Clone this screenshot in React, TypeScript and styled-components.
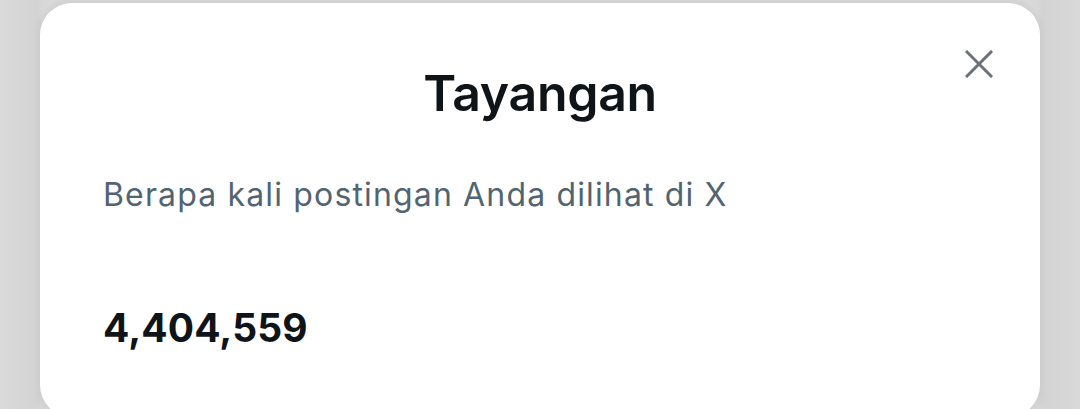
import styled, { createGlobalStyle } from "styled-components";

const GlobalStyle = createGlobalStyle`
  html,
  body {
    margin: 0;
    padding: 0;
    background: #d8d8d8;
    overflow: hidden;
  }
  * {
    box-sizing: border-box;
  }
`;

const Backdrop = styled.div`
  width: 1080px;
  height: 409px;
  padding: 3px 40px 0 40px;
  background: linear-gradient(90deg, #dadada 0%, #d3d3d3 3.5%, #d8d8d8 4%, #d8d8d8 96%, #d3d3d3 96.5%, #d9d9d9 100%);
  overflow: hidden;
`;

const Sheet = styled.div`
  width: 1000px;
  height: 414px;
  background: #ffffff;
  border-radius: 32px;
  box-shadow: 0 0 8px rgba(0, 0, 0, 0.08);
  padding: 0 63px;
  font-family: Inter, "Noto Sans", "Liberation Sans", sans-serif;
  color: #0f1419;
`;

const Header = styled.div`
  display: grid;
  grid-template-columns: 1fr auto 1fr;
  align-items: center;
  padding-top: 58px;
`;

const Title = styled.h1`
  grid-column: 2;
  margin: 0;
  font-size: 50px;
  line-height: 64px;
  font-weight: 600;
  letter-spacing: -0.3px;
`;

const CloseButton = styled.button`
  grid-column: 3;
  justify-self: end;
  align-self: start;
  margin: -15px -20px 0 0;
  width: 36px;
  height: 36px;
  padding: 0;
  border: none;
  background: transparent;
  display: flex;
  align-items: center;
  justify-content: center;
  cursor: pointer;
`;

const Subtitle = styled.p`
  margin: 50px 0 0 0;
  font-size: 32px;
  line-height: 40px;
  letter-spacing: 1.15px;
  color: #536471;
  font-weight: 400;
`;

const Count = styled.div`
  margin-top: 89px;
  font-size: 39px;
  line-height: 48px;
  font-weight: 700;
  letter-spacing: 0.1px;
`;

function CloseIcon() {
  return (
    <svg width="28" height="28" viewBox="0 0 28 28">
      <path
        d="M2 2 L26 26 M26 2 L2 26"
        stroke="#6b7176"
        strokeWidth="3"
        strokeLinecap="square"
      />
    </svg>
  );
}

export default function App() {
  return (
    <>
      <GlobalStyle />
      <Backdrop>
        <Sheet>
          <Header>
            <Title>Tayangan</Title>
            <CloseButton aria-label="Tutup">
              <CloseIcon />
            </CloseButton>
          </Header>
          <Subtitle>Berapa kali postingan Anda dilihat di X</Subtitle>
          <Count>4,404,559</Count>
        </Sheet>
      </Backdrop>
    </>
  );
}
